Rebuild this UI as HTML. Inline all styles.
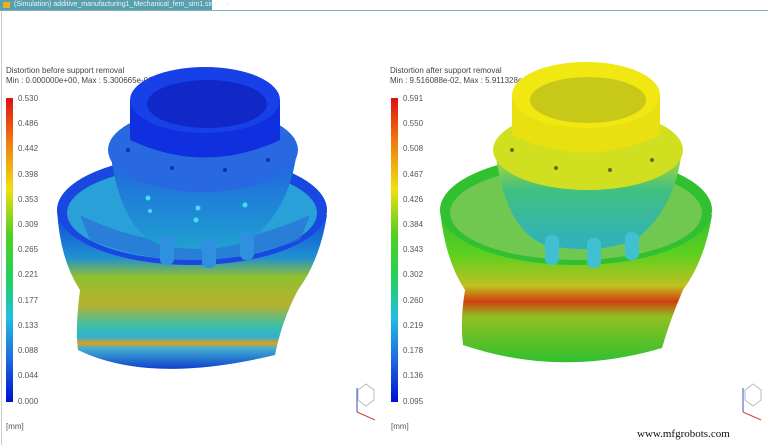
<!DOCTYPE html>
<html><head><meta charset="utf-8"><style>
body{margin:0;width:768px;height:445px;overflow:hidden;background:#fff;font-family:"Liberation Sans",sans-serif;position:relative}
.tab{position:absolute;left:0;top:0;width:212px;height:10px;background:#5a9fb0;color:#e8f4f7;font-size:7px;line-height:10px;padding-left:14px;box-sizing:border-box;white-space:nowrap}
.tabline{position:absolute;left:0;top:10px;width:768px;height:1px;background:#7fb2c0}
.t{position:absolute;font-size:8px;color:#444;white-space:nowrap}
.lab{position:absolute;font-size:8px;color:#555}
</style></head><body>
<div class="tab">(Simulation) additive_manufacturing1_Mechanical_fem_sim1.sim &nbsp;▫ ✕</div>
<div style="position:absolute;left:3px;top:2px;width:7px;height:6px;background:#e8b020"></div>
<div class="tabline"></div>
<div style="position:absolute;left:1px;top:11px;width:1px;height:434px;background:#ccc"></div>

<div class="t" style="left:6px;top:66px">Distortion before support removal</div>
<div class="t" style="left:6px;top:76px">Min : 0.000000e+00, Max : 5.300665e-01, Units = mm</div>
<div class="t" style="left:390px;top:66px">Distortion after support removal</div>
<div class="t" style="left:390px;top:76px">Min : 9.516088e-02, Max : 5.911328e-01, Units = mm</div>

<svg width="768" height="445" style="position:absolute;left:0;top:0">
<defs>
<linearGradient id="legL" x1="0" y1="0" x2="0" y2="1">
<stop offset="0" stop-color="#e01010"/><stop offset=".15" stop-color="#f08010"/><stop offset=".3" stop-color="#f0e010"/><stop offset=".45" stop-color="#50d020"/><stop offset=".6" stop-color="#20d060"/><stop offset=".72" stop-color="#20c0e0"/><stop offset=".85" stop-color="#2070e0"/><stop offset="1" stop-color="#0010d0"/></linearGradient>
<linearGradient id="bodyL" x1="0" y1="0" x2="0" y2="1">
<stop offset="0" stop-color="#1040e0"/><stop offset=".3" stop-color="#2090d0"/><stop offset=".42" stop-color="#90c030"/><stop offset=".6" stop-color="#b8b030"/><stop offset=".72" stop-color="#40c0a0"/><stop offset=".8" stop-color="#30b0d0"/><stop offset=".84" stop-color="#e0a020"/><stop offset=".87" stop-color="#40b0d0"/><stop offset="1" stop-color="#1040d0"/></linearGradient>
<linearGradient id="bodyR" x1="0" y1="0" x2="0" y2="1">
<stop offset="0" stop-color="#30c030"/><stop offset=".3" stop-color="#60d020"/><stop offset=".5" stop-color="#c0c020"/><stop offset=".6" stop-color="#d04010"/><stop offset=".7" stop-color="#90c020"/><stop offset="1" stop-color="#30c030"/></linearGradient>
<linearGradient id="coneL" x1="0" y1="0" x2="0" y2="1"><stop offset="0" stop-color="#2060e0"/><stop offset="1" stop-color="#20a0d0"/></linearGradient>
<linearGradient id="coneR" x1="0" y1="0" x2="0" y2="1"><stop offset="0" stop-color="#c8e020"/><stop offset=".4" stop-color="#40c080"/><stop offset="1" stop-color="#30b0c0"/></linearGradient>
</defs>
<rect x="6" y="98" width="7" height="304" fill="url(#legL)"/>
<rect x="391" y="98" width="7" height="304" fill="url(#legL)"/>

<!-- left part -->
<g>
<path d="M57 210 Q60 260 80 290 Q75 330 78 350 Q150 385 275 355 Q282 320 298 290 Q320 260 327 215 Z" fill="url(#bodyL)"/>
<ellipse cx="192" cy="210" rx="135" ry="55" fill="#1848e0"/>
<ellipse cx="192" cy="213" rx="125" ry="47" fill="#2aa0d8"/>
<path d="M80 215 Q190 270 310 215 L300 240 Q190 280 90 240Z" fill="#2a70d8" opacity=".7"/>
<path d="M110 150 Q120 230 160 245 Q210 255 250 240 Q290 210 297 150 Z" fill="url(#coneL)"/>
<ellipse cx="203" cy="150" rx="95" ry="42" fill="#2868e0"/>
<path d="M130 100 L130 140 Q205 175 280 140 L280 100 Z" fill="#1030e0"/>
<ellipse cx="205" cy="100" rx="75" ry="33" fill="#1840e8"/>
<ellipse cx="207" cy="104" rx="60" ry="24" fill="#1028c8"/>
<g fill="#1030a0"><circle cx="128" cy="150" r="2"/><circle cx="172" cy="168" r="2"/><circle cx="225" cy="170" r="2"/><circle cx="268" cy="160" r="2"/></g>
<g fill="#40e0f0"><circle cx="148" cy="198" r="2.5"/><circle cx="198" cy="208" r="2.5"/><circle cx="245" cy="205" r="2.5"/><circle cx="196" cy="220" r="2.5"/><circle cx="150" cy="211" r="2"/></g>
<g fill="#3090e0"><rect x="160" y="235" width="14" height="30" rx="6"/><rect x="202" y="238" width="14" height="30" rx="6"/><rect x="240" y="232" width="14" height="28" rx="6"/></g>
</g>

<!-- right part -->
<g>
<path d="M440 210 Q445 260 465 290 Q460 320 463 345 Q560 378 662 348 Q670 320 683 290 Q705 260 712 215 Z" fill="url(#bodyR)"/>
<ellipse cx="576" cy="210" rx="136" ry="55" fill="#30c030"/>
<ellipse cx="576" cy="213" rx="126" ry="47" fill="#70c850"/>
<path d="M495 150 Q505 230 545 245 Q595 255 635 240 Q675 210 682 150 Z" fill="url(#coneR)"/>
<ellipse cx="588" cy="150" rx="95" ry="40" fill="#d0e020"/>
<path d="M512 95 L512 135 Q585 170 660 135 L660 95 Z" fill="#e8e010"/>
<ellipse cx="586" cy="95" rx="74" ry="33" fill="#f0e810"/>
<ellipse cx="588" cy="100" rx="58" ry="23" fill="#c8c818"/>
<g fill="#607020"><circle cx="512" cy="150" r="2"/><circle cx="556" cy="168" r="2"/><circle cx="610" cy="170" r="2"/><circle cx="652" cy="160" r="2"/></g>
<g fill="#40c0d0"><rect x="545" y="235" width="14" height="30" rx="6"/><rect x="587" y="238" width="14" height="30" rx="6"/><rect x="625" y="232" width="14" height="28" rx="6"/></g>
</g>

<g stroke-width="1" fill="none">
<path d="M358 390 l8 -6 l8 6 l0 10 l-8 6 l-8 -6z" stroke="#bbb"/><line x1="357" y1="412" x2="357" y2="388" stroke="#3050c0"/><line x1="357" y1="412" x2="375" y2="420" stroke="#d04040"/>
<path d="M745 390 l8 -6 l8 6 l0 10 l-8 6 l-8 -6z" stroke="#bbb"/><line x1="743" y1="412" x2="743" y2="388" stroke="#3050c0"/><line x1="743" y1="412" x2="761" y2="420" stroke="#d04040"/>
</g>
</svg>

<div class="lab" style="left:18px;top:94px">0.530</div>
<div class="lab" style="left:18px;top:119px">0.486</div>
<div class="lab" style="left:18px;top:144px">0.442</div>
<div class="lab" style="left:18px;top:170px">0.398</div>
<div class="lab" style="left:18px;top:195px">0.353</div>
<div class="lab" style="left:18px;top:220px">0.309</div>
<div class="lab" style="left:18px;top:245px">0.265</div>
<div class="lab" style="left:18px;top:270px">0.221</div>
<div class="lab" style="left:18px;top:296px">0.177</div>
<div class="lab" style="left:18px;top:321px">0.133</div>
<div class="lab" style="left:18px;top:346px">0.088</div>
<div class="lab" style="left:18px;top:371px">0.044</div>
<div class="lab" style="left:18px;top:397px">0.000</div>
<div class="lab" style="left:6px;top:422px">[mm]</div>

<div class="lab" style="left:403px;top:94px">0.591</div>
<div class="lab" style="left:403px;top:119px">0.550</div>
<div class="lab" style="left:403px;top:144px">0.508</div>
<div class="lab" style="left:403px;top:170px">0.467</div>
<div class="lab" style="left:403px;top:195px">0.426</div>
<div class="lab" style="left:403px;top:220px">0.384</div>
<div class="lab" style="left:403px;top:245px">0.343</div>
<div class="lab" style="left:403px;top:270px">0.302</div>
<div class="lab" style="left:403px;top:296px">0.260</div>
<div class="lab" style="left:403px;top:321px">0.219</div>
<div class="lab" style="left:403px;top:346px">0.178</div>
<div class="lab" style="left:403px;top:371px">0.136</div>
<div class="lab" style="left:403px;top:397px">0.095</div>
<div class="lab" style="left:391px;top:422px">[mm]</div>

<div style="position:absolute;left:637px;top:428px;font-family:'Liberation Serif',serif;font-size:11px;color:#111">www.mfgrobots.com</div>
</body></html>
